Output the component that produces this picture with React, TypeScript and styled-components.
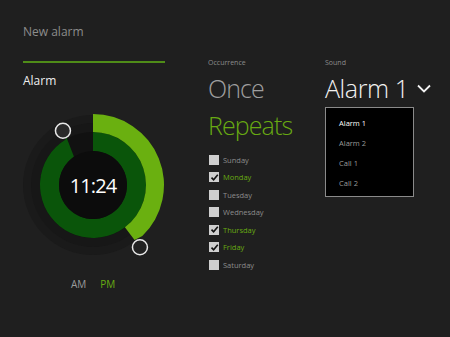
import React from "react";
import styled, { createGlobalStyle } from "styled-components";

const COLORS = {
  bg: "#1f1f1f",
  green: "#68aa12",
  arcGreen: "#6ab010",
  darkGreen: "#0a550a",
  line: "#4f8c18",
  gray: "#8c8c8c",
  optionGray: "#9e9e9e",
  white: "#eeeeee",
};

const GlobalStyle = createGlobalStyle`
  html, body {
    margin: 0;
    background: ${COLORS.bg};
  }
  body {
    font-family: "Open Sans", "Noto Sans", sans-serif;
  }
`;

const S = {
  Page: styled.div`
    display: flex;
    height: 337px;
    box-sizing: border-box;
    padding: 24px 0 0 23px;
    background: ${COLORS.bg};
    overflow: hidden;
  `,
  Left: styled.div`
    width: 142px;
    display: flex;
    flex-direction: column;
  `,
  Title: styled.h1`
    margin: 0;
    font-size: 12px;
    line-height: 16px;
    font-weight: 400;
    color: ${COLORS.gray};
  `,
  Underline: styled.div`
    height: 2px;
    margin-top: 21px;
    background: ${COLORS.line};
  `,
  SectionLabel: styled.div`
    margin-top: 10px;
    font-size: 12px;
    line-height: 16px;
    color: ${COLORS.white};
  `,
  Dial: styled.svg`
    display: block;
    margin-top: 22px;
  `,
  Meridiem: styled.div`
    display: flex;
    gap: 14px;
    margin-top: 6px;
    padding-left: 48px;
    font-size: 10px;
    line-height: 14px;
  `,
  MeridiemOption: styled.span<{ $active?: boolean }>`
    color: ${(p) => (p.$active ? COLORS.green : "#9a9a9a")};
  `,
  Column: styled.div<{ $width: number; $offset: number }>`
    width: ${(p) => p.$width}px;
    margin-left: ${(p) => p.$offset}px;
    padding-top: 34px;
    display: flex;
    flex-direction: column;
  `,
  SmallLabel: styled.div`
    font-size: 7px;
    line-height: 10px;
    color: ${COLORS.gray};
  `,
  OptionList: styled.div`
    display: flex;
    flex-direction: column;
    gap: 7px;
    margin-top: 5px;
  `,
  BigOption: styled.div<{ $active?: boolean }>`
    font-size: 25px;
    line-height: 30px;
    font-weight: 300;
    letter-spacing: -0.9px;
    color: ${(p) => (p.$active ? COLORS.green : COLORS.optionGray)};
  `,
  DayList: styled.div`
    display: flex;
    flex-direction: column;
    margin-top: 11px;
    padding-left: 1px;
  `,
  DayRow: styled.label`
    display: flex;
    align-items: center;
    gap: 4px;
    height: 17.5px;
  `,
  CheckBox: styled.span`
    width: 10px;
    height: 10px;
    background: #cfcfcf;
    display: flex;
    align-items: center;
    justify-content: center;
  `,
  DayName: styled.span<{ $checked?: boolean }>`
    font-size: 7.5px;
    color: ${(p) => (p.$checked ? COLORS.green : COLORS.gray)};
  `,
  SoundRow: styled.div`
    display: flex;
    align-items: center;
    gap: 8px;
    margin-top: 5px;
  `,
  SoundValue: styled.div`
    font-size: 25px;
    line-height: 30px;
    font-weight: 300;
    letter-spacing: -0.4px;
    color: #f2f2f2;
  `,
  Dropdown: styled.ul`
    list-style: none;
    margin: 4px 0 0;
    width: 89px;
    height: 90px;
    box-sizing: border-box;
    padding: 5px 0 3px;
    border: 1px solid #8a8a8a;
    background: #000;
  `,
  DropdownItem: styled.li<{ $selected?: boolean }>`
    height: 20px;
    line-height: 20px;
    padding-left: 13px;
    font-size: 7.5px;
    font-weight: ${(p) => (p.$selected ? 500 : 400)};
    color: ${(p) => (p.$selected ? "#ffffff" : "#9a9a9a")};
  `,
};

const CX = 70;
const CY = 74;

const pt = (r: number, deg: number) => {
  const a = (deg * Math.PI) / 180;
  return `${(CX + r * Math.sin(a)).toFixed(2)} ${(CY - r * Math.cos(a)).toFixed(2)}`;
};

const outerArc = [
  `M ${pt(71, 0)}`,
  `A 71 71 0 0 1 ${pt(71, 136)}`,
  `L ${pt(69, 143)}`,
  `L ${pt(53, 143)}`,
  `A 53 53 0 0 0 ${pt(53, 0)}`,
  "Z",
].join(" ");

const innerArc = [
  `M ${pt(53, 0)}`,
  `A 53 53 0 1 1 ${pt(53, 329)}`,
  `L ${pt(55, 331)}`,
  `L ${pt(34, 326)}`,
  `A 34 34 0 1 0 ${pt(34, 0)}`,
  "Z",
].join(" ");

const handle = (r: number, deg: number) => {
  const [x, y] = pt(r, deg).split(" ").map(Number);
  return { cx: x, cy: y };
};

const AlarmDial = () => (
  <S.Dial width={150} height={160} viewBox="0 0 150 160">
    <circle cx={CX} cy={CY} r={70} fill="#1a1a1a" />
    <circle cx={CX} cy={CY} r={62} fill="#171717" />
    <circle cx={CX} cy={CY} r={53} fill="#111111" />
    <path d={innerArc} fill={COLORS.darkGreen} />
    <path d={outerArc} fill={COLORS.arcGreen} />
    <circle cx={CX} cy={CY} r={34} fill="#0c0c0c" />
    <text
      x={CX}
      y={CY + 8}
      textAnchor="middle"
      fill="#ffffff"
      fontSize={20}
      fontWeight={500}
      letterSpacing={-0.9}
      fontFamily='"Open Sans", "Noto Sans", sans-serif'
    >
      11:24
    </text>
    <circle {...handle(62, 331)} r={7.5} fill="#2a2a2a" stroke="#e8e8e8" strokeWidth={1.5} />
    <circle {...handle(78, 143)} r={7.5} fill="#222222" stroke="#e8e8e8" strokeWidth={1.5} />
  </S.Dial>
);

const days = [
  { name: "Sunday", checked: false },
  { name: "Monday", checked: true },
  { name: "Tuesday", checked: false },
  { name: "Wednesday", checked: false },
  { name: "Thursday", checked: true },
  { name: "Friday", checked: true },
  { name: "Saturday", checked: false },
];

const sounds = ["Alarm 1", "Alarm 2", "Call 1", "Call 2"];

const Check = () => (
  <svg width={9} height={9} viewBox="0 0 9 9">
    <path d="M1.5 4.6 L3.6 6.8 L7.8 1.8" fill="none" stroke="#111" strokeWidth={1.6} />
  </svg>
);

export default function App() {
  return (
    <>
      <GlobalStyle />
      <S.Page>
        <S.Left>
          <S.Title>New alarm</S.Title>
          <S.Underline />
          <S.SectionLabel>Alarm</S.SectionLabel>
          <AlarmDial />
          <S.Meridiem>
            <S.MeridiemOption>AM</S.MeridiemOption>
            <S.MeridiemOption $active>PM</S.MeridiemOption>
          </S.Meridiem>
        </S.Left>

        <S.Column $width={117} $offset={43}>
          <S.SmallLabel>Occurrence</S.SmallLabel>
          <S.OptionList>
            <S.BigOption>Once</S.BigOption>
            <S.BigOption $active>Repeats</S.BigOption>
          </S.OptionList>
          <S.DayList>
            {days.map((d) => (
              <S.DayRow key={d.name}>
                <S.CheckBox>{d.checked && <Check />}</S.CheckBox>
                <S.DayName $checked={d.checked}>{d.name}</S.DayName>
              </S.DayRow>
            ))}
          </S.DayList>
        </S.Column>

        <S.Column $width={120} $offset={0}>
          <S.SmallLabel>Sound</S.SmallLabel>
          <S.SoundRow>
            <S.SoundValue>Alarm 1</S.SoundValue>
            <svg width={14} height={9} viewBox="0 0 14 9">
              <path d="M1 1.5 L7 7.5 L13 1.5" fill="none" stroke="#f2f2f2" strokeWidth={1.8} />
            </svg>
          </S.SoundRow>
          <S.Dropdown>
            {sounds.map((s, i) => (
              <S.DropdownItem key={s} $selected={i === 0}>
                {s}
              </S.DropdownItem>
            ))}
          </S.Dropdown>
        </S.Column>
      </S.Page>
    </>
  );
}
